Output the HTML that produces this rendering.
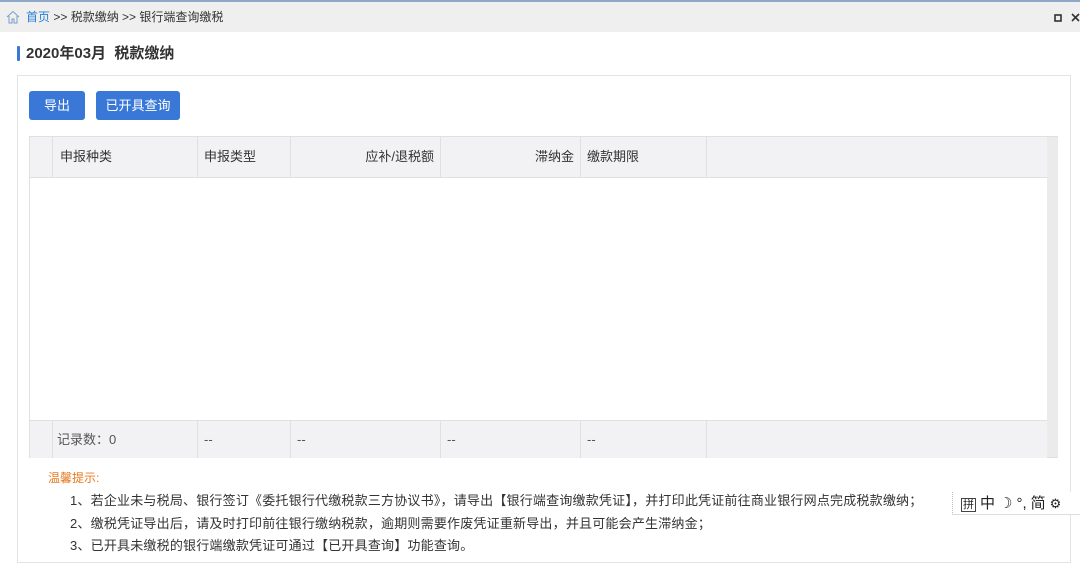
<!DOCTYPE html>
<html><head><meta charset="utf-8"><style>
*{margin:0;padding:0;box-sizing:border-box}
body{width:1080px;height:564px;background:#fff;font-family:"Liberation Sans","Noto Sans CJK SC",sans-serif;font-size:13px;color:#333;position:relative;overflow:hidden}
.top{position:absolute;left:0;top:0;width:1080px;height:2px;background:#8fa8c8}
.bc{position:absolute;left:0;top:2px;width:1080px;height:30px;background:#efefef;font-size:12px;line-height:30px;padding-left:26px;color:#333}
.bc a{color:#2a7fd4}
.title{position:absolute;left:17px;top:44px;font-size:15px;font-weight:bold;color:#333;line-height:20px;padding-left:9px}
.title:before{content:"";position:absolute;left:0;top:2px;width:3px;height:15px;background:#3a78d8;border-radius:1px}
.panel{position:absolute;left:17px;top:75px;width:1054px;height:488px;border:1px solid #e4e4e4}
.btn{position:absolute;top:91px;height:29px;background:#3a78d8;color:#fff;border-radius:3px;line-height:29px;text-align:center;font-size:13px}
.tbl{position:absolute;left:29px;top:136px;width:1029px;height:322px;border:1px solid #e0e0e0}
.hdr{position:absolute;left:0;top:0;width:1017px;height:41px;background:#f2f2f4;border-bottom:1px solid #e0e0e0}
.ftr{position:absolute;left:0;top:283px;width:1017px;height:38px;background:#f2f2f4;border-top:1px solid #e0e0e0}
.sb{position:absolute;left:1017px;top:0;width:11px;height:320px;background:#ebebeb}
.c{position:absolute;top:0;height:100%;border-right:1px solid #e0e0e0;line-height:40px;padding:0 6px}
.ftr .c{line-height:38px;color:#555}
.tips{position:absolute;left:48px;top:469px;font-size:12px;color:#333}
.tips .h{color:#e87a1e;line-height:18px;margin-bottom:3px}
.tips p{padding-left:22px;line-height:22.5px;font-size:13px;letter-spacing:0.2px;white-space:nowrap}
.ime{position:absolute;left:952px;top:492px;width:128px;height:23px;border-left:1px dotted #bbb;border-bottom:1px solid #ddd;background:#fff;font-size:15px;line-height:23px;padding-left:8px;color:#222;white-space:nowrap}
.ime span{margin-right:4px}
</style></head><body>
<div class="top"></div>
<div class="bc"><svg style="position:absolute;left:6px;top:8px" width="14" height="14" viewBox="0 0 14 14"><path d="M1 7L7 1.5L13 7M3 6v7h3v-4h2v4h3V6" fill="none" stroke="#7a9cc8" stroke-width="1"/></svg><a>首页</a> &gt;&gt; 税款缴纳 &gt;&gt; 银行端查询缴税
<svg style="position:absolute;left:1054px;top:12px" width="8" height="8"><rect x="1" y="1" width="6" height="6" fill="none" stroke="#333" stroke-width="1.6"/></svg>
<svg style="position:absolute;left:1071px;top:11px" width="9" height="9"><path d="M1 1L8 8M8 1L1 8" stroke="#333" stroke-width="1.6"/></svg></div>
<div class="title">2020年03月&nbsp;&nbsp;税款缴纳</div>
<div class="panel"></div>
<div class="btn" style="left:29px;width:56px">导出</div>
<div class="btn" style="left:96px;width:84px">已开具查询</div>
<div class="tbl">
<div class="hdr">
<div class="c" style="left:0;width:23px"></div>
<div class="c" style="left:23px;width:145px;padding-left:7px">申报种类</div>
<div class="c" style="left:168px;width:93px">申报类型</div>
<div class="c" style="left:261px;width:150px;text-align:right">应补/退税额</div>
<div class="c" style="left:411px;width:140px;text-align:right">滞纳金</div>
<div class="c" style="left:551px;width:126px">缴款期限</div>
</div>
<div class="ftr">
<div class="c" style="left:0;width:23px"></div>
<div class="c" style="left:23px;width:145px;padding-left:4px">记录数：0</div>
<div class="c" style="left:168px;width:93px">--</div>
<div class="c" style="left:261px;width:150px">--</div>
<div class="c" style="left:411px;width:140px">--</div>
<div class="c" style="left:551px;width:126px">--</div>
</div>
<div class="sb"></div>
</div>
<div class="tips"><div class="h">温馨提示:</div>
<p>1、若企业未与税局、银行签订《委托银行代缴税款三方协议书》，请导出【银行端查询缴款凭证】，并打印此凭证前往商业银行网点完成税款缴纳；</p>
<p>2、缴税凭证导出后，请及时打印前往银行缴纳税款，逾期则需要作废凭证重新导出，并且可能会产生滞纳金；</p>
<p>3、已开具未缴税的银行端缴款凭证可通过【已开具查询】功能查询。</p></div>
<div class="ime"><span style="border:1px solid #444;font-size:11px;padding:0 1px">拼</span><span>中</span><span>☽</span><span>°,</span><span>简</span><span style="font-size:13px">⚙</span></div>
</body></html>
